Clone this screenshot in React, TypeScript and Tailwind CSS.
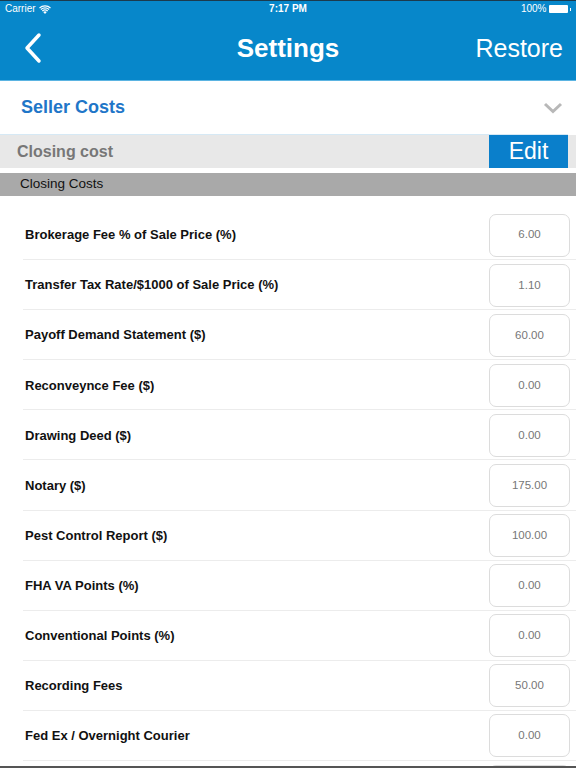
import React from "react";

const rows: [string, string][] = [
  ["Brokerage Fee % of Sale Price (%)", "6.00"],
  ["Transfer Tax Rate/$1000 of Sale Price (%)", "1.10"],
  ["Payoff Demand Statement ($)", "60.00"],
  ["Reconveynce Fee ($)", "0.00"],
  ["Drawing Deed ($)", "0.00"],
  ["Notary ($)", "175.00"],
  ["Pest Control Report ($)", "100.00"],
  ["FHA VA Points (%)", "0.00"],
  ["Conventional Points (%)", "0.00"],
  ["Recording Fees", "50.00"],
  ["Fed Ex / Overnight Courier", "0.00"],
  ["", ""],
];

export default function App() {
  return (
    <div
      className="w-[576px] h-[768px] overflow-hidden bg-white relative"
      style={{ fontFamily: '"Liberation Sans", Arial, sans-serif' }}
    >
      {/* Header */}
      <div className="bg-[#0787ca] h-[80px] border-t border-[#1c3a4d] flex flex-col">
        <div className="h-[16px] flex items-center justify-between px-[5px] text-white text-[10px] leading-none relative">
          <div className="flex items-center gap-[3px]">
            <span>Carrier</span>
            <svg width="12" height="9" viewBox="0 0 12 9" fill="white">
              <path d="M6 9 L4.2 7 A2.6 2.6 0 0 1 7.8 7 Z" />
              <path d="M2.9 5.6 A4.6 4.6 0 0 1 9.1 5.6 L8.3 6.5 A3.4 3.4 0 0 0 3.7 6.5 Z" />
              <path d="M1.5 4.1 A6.6 6.6 0 0 1 10.5 4.1 L9.7 5 A5.4 5.4 0 0 0 2.3 5 Z" />
              <path d="M0.1 2.6 A8.6 8.6 0 0 1 11.9 2.6 L11.1 3.5 A7.4 7.4 0 0 0 0.9 3.5 Z" />
            </svg>
          </div>
          <span className="absolute left-1/2 -translate-x-1/2 font-bold">7:17 PM</span>
          <div className="flex items-center gap-[2px]">
            <span>100%</span>
            <div className="w-[19px] h-[8px] bg-white rounded-[1px]" />
            <div className="w-[1.5px] h-[3px] bg-white" />
          </div>
        </div>
        <div className="flex-1 flex items-center justify-between relative pl-[22px] pr-[13px]">
          <svg width="22" height="32" viewBox="0 0 22 32" className="mt-[-1px]">
            <path d="M17 3 L5 16 L17 29" stroke="white" strokeWidth="3.5" fill="none" strokeLinecap="round" strokeLinejoin="round" />
          </svg>
          <span className="absolute left-1/2 -translate-x-1/2 text-white font-bold text-[26px]">Settings</span>
          <span className="text-white text-[25px]">Restore</span>
        </div>
      </div>
      <div className="h-[1px] bg-[#5bb4e2]" />

      {/* Seller Costs */}
      <div className="h-[53px] flex items-center justify-between pl-[21px] pr-[13px]">
        <span className="text-[#1f76c8] font-bold text-[18px]">Seller Costs</span>
        <svg width="20" height="12" viewBox="0 0 20 12">
          <path d="M2 2 L10 9.5 L18 2" stroke="#b8b8b8" strokeWidth="3" fill="none" />
        </svg>
      </div>
      <div className="h-[1px] bg-[#d6e9f5] mr-[8px]" />

      {/* Closing cost bar */}
      <div className="h-[33px] bg-[#e8e8e8] flex items-center justify-between pl-[17px] pr-[8px]">
        <span className="text-[#777777] font-bold text-[16px]">Closing cost</span>
        <div className="w-[79px] h-[33px] bg-[#0a7fcb] flex items-center justify-center text-white text-[23px]">
          Edit
        </div>
      </div>
      <div className="h-[5px]" />
      <div className="h-[23px] bg-[#a9a9a9] flex items-center pl-[20px] text-[13.5px] text-[#111]">
        Closing Costs
      </div>
      <div className="h-[14px]" />

      {/* Rows */}
      <div className="flex flex-col">
        {rows.map(([label, value], i) => (
          <div key={i} className="h-[50.1px] shrink-0 flex items-center justify-between pl-[25px] pr-[6px] relative">
            <span className="font-bold text-[13px] text-[#111]">{label}</span>
            <div className="w-[81px] h-[43px] border border-[#dcdcdc] rounded-[7px] flex items-center justify-center text-[11.5px] text-[#777]">
              {value}
            </div>
            <div className="absolute left-[23px] right-0 bottom-0 h-[1px] bg-[#ececec]" />
          </div>
        ))}
      </div>

      <div className="absolute left-0 right-0 bottom-0 h-[2px] bg-[#555555]" />
    </div>
  );
}
